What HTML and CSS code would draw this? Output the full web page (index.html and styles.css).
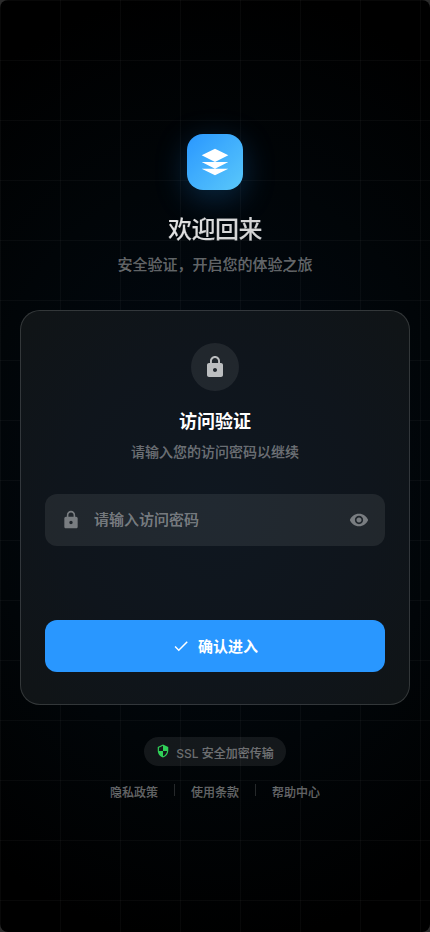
FILE: index.html
```html
<!DOCTYPE html>
<html lang="zh-CN">
<head>
<meta charset="utf-8">
<meta name="viewport" content="width=device-width, initial-scale=1">
<title>访问验证</title>
<link rel="stylesheet" href="styles.css">
</head>
<body>
<div class="screen">
  <main class="page">
    <header class="brand">
      <div class="logo">
        <svg width="32" height="32" viewBox="0 0 24 24" fill="currentColor"><path d="M12 2L2 7l10 5 10-5-10-5zM2 17l10 5 10-5M2 12l10 5 10-5"/></svg>
      </div>
      <h1 class="brand-title">欢迎回来</h1>
      <p class="brand-subtitle">安全验证，开启您的体验之旅</p>
    </header>
    <section class="card">
      <div class="card-icon">
        <svg width="24" height="24" viewBox="0 0 24 24" fill="currentColor"><path d="M18 8h-1V6c0-2.76-2.24-5-5-5S7 3.24 7 6v2H6c-1.1 0-2 .9-2 2v10c0 1.1.9 2 2 2h12c1.1 0 2-.9 2-2V10c0-1.1-.9-2-2-2zm-6 9c-1.1 0-2-.9-2-2s.9-2 2-2 2 .9 2 2-.9 2-2 2zm3.1-9H8.9V6c0-1.71 1.39-3.1 3.1-3.1 1.71 0 3.1 1.39 3.1 3.1v2z"/></svg>
      </div>
      <h2 class="card-title">访问验证</h2>
      <p class="card-desc">请输入您的访问密码以继续</p>
      <div class="field">
        <svg width="20" height="20" viewBox="0 0 24 24" fill="currentColor"><path d="M18 8h-1V6c0-2.76-2.24-5-5-5S7 3.24 7 6v2H6c-1.1 0-2 .9-2 2v10c0 1.1.9 2 2 2h12c1.1 0 2-.9 2-2V10c0-1.1-.9-2-2-2zm-6 9c-1.1 0-2-.9-2-2s.9-2 2-2 2 .9 2 2-.9 2-2 2zm3.1-9H8.9V6c0-1.71 1.39-3.1 3.1-3.1 1.71 0 3.1 1.39 3.1 3.1v2z"/></svg>
        <input class="field-input" type="password" placeholder="请输入访问密码">
        <svg width="20" height="20" viewBox="0 0 24 24" fill="currentColor"><path d="M12 4.5C7 4.5 2.73 7.61 1 12c1.73 4.39 6 7.5 11 7.5s9.27-3.11 11-7.5c-1.73-4.39-6-7.5-11-7.5zM12 17c-2.76 0-5-2.24-5-5s2.24-5 5-5 5 2.24 5 5-2.24 5-5 5zm0-8c-1.66 0-3 1.34-3 3s1.34 3 3 3 3-1.34 3-3-1.34-3-3-3z"/></svg>
      </div>
      <button class="submit" type="button">
        <svg width="18" height="18" viewBox="0 0 24 24" fill="currentColor"><path d="M9 16.17L4.83 12l-1.42 1.41L9 19 21 7l-1.41-1.41z"/></svg>
        <span class="submit-label">确认进入</span>
      </button>
    </section>
    <footer class="footer">
      <div class="badge">
        <svg class="shield" width="14" height="14" viewBox="0 0 24 24" fill="currentColor"><path d="M12 1L3 5v6c0 5.55 3.84 10.74 9 12 5.16-1.26 9-6.45 9-12V5l-9-4zm0 10.99h7c-.53 4.12-3.28 7.79-7 8.94V12H5V6.3l7-3.11v8.8z"/></svg>
        <span class="badge-text"><span class="latin">SSL</span> 安全加密传输</span>
      </div>
      <nav class="links">
        <a class="link">隐私政策</a>
        <span class="divider"></span>
        <a class="link">使用条款</a>
        <span class="divider"></span>
        <a class="link">帮助中心</a>
      </nav>
    </footer>
  </main>
</div>
</body>
</html>
```
FILE: styles.css
```css
* {
  box-sizing: border-box;
  margin: 0;
  padding: 0;
}

body {
  background: #2b2b2b;
  color: #fff;
  font-family: Inter, "Noto Sans CJK SC", sans-serif;
  font-weight: 500;
  -webkit-text-stroke-width: 0.12px;
}

svg {
  display: block;
  flex: none;
}

.screen {
  height: 932px;
  border-radius: 8px;
  overflow: hidden;
  background:
    linear-gradient(rgba(255, 255, 255, 0.03) 1px, transparent 1px) 0 0 / 60px 60px,
    linear-gradient(90deg, rgba(255, 255, 255, 0.03) 1px, transparent 1px) 0 0 / 60px 60px,
    radial-gradient(ellipse 390px 480px at 50% 50%, #020a14 0%, #010508 60%, #000 100%);
}

.page {
  display: flex;
  flex-direction: column;
  height: 100%;
  padding: 134px 20px 0;
}

.brand {
  display: flex;
  flex-direction: column;
  align-items: center;
}

.logo {
  display: grid;
  place-items: center;
  width: 56px;
  height: 56px;
  border-radius: 16px;
  background: linear-gradient(135deg, #2997ff, #5ac8fa);
  box-shadow: 0 8px 32px rgba(41, 151, 255, 0.25);
}

.brand-title {
  align-self: stretch;
  margin-top: 21px;
  font-size: 24px;
  font-weight: 500;
  line-height: 38px;
  letter-spacing: -0.5px;
  text-align: center;
  background: linear-gradient(135deg, #fff, rgba(255, 255, 255, 0.7));
  background-clip: text;
  -webkit-background-clip: text;
  color: transparent;
}

.brand-subtitle {
  margin-top: 4px;
  font-size: 15px;
  line-height: 24px;
  color: rgba(255, 255, 255, 0.38);
}

.card {
  display: flex;
  flex-direction: column;
  align-items: center;
  height: 395px;
  margin-top: 33px;
  padding: 32px 24px;
  border: 1px solid rgba(255, 255, 255, 0.15);
  border-radius: 20px;
  background: radial-gradient(ellipse at center, #0f1720 0%, #0f151c 55%, #101416 100%);
}

.card-icon {
  display: grid;
  place-items: center;
  width: 48px;
  height: 48px;
  border-radius: 50%;
  background: rgba(255, 255, 255, 0.08);
  color: rgba(255, 255, 255, 0.7);
}

.card-title {
  margin-top: 17px;
  font-size: 18px;
  font-weight: 700;
  line-height: 28px;
  -webkit-text-stroke-width: 0;
}

.card-desc {
  margin-top: 5px;
  font-size: 14px;
  line-height: 22px;
  color: rgba(255, 255, 255, 0.38);
}

.field {
  display: flex;
  align-items: center;
  gap: 13px;
  width: 100%;
  height: 52px;
  margin-top: 31px;
  padding: 0 16px;
  border-radius: 12px;
  background: rgba(255, 255, 255, 0.08);
  color: rgba(255, 255, 255, 0.4);
}

.field-input {
  flex: 1;
  min-width: 0;
  padding-bottom: 2px;
  border: 0;
  outline: 0;
  background: none;
  color: #fff;
  font: inherit;
  font-size: 15px;
}

.field-input::placeholder {
  color: rgba(255, 255, 255, 0.4);
}

.submit {
  display: flex;
  align-items: center;
  justify-content: center;
  gap: 8px;
  width: 100%;
  height: 52px;
  margin-top: auto;
  border: 0;
  border-radius: 12px;
  background: #2997ff;
  color: #fff;
  font-family: inherit;
  font-size: 15px;
  font-weight: 700;
  -webkit-text-stroke-width: 0;
}

.submit-label {
  padding-bottom: 2px;
}

.footer {
  display: flex;
  flex-direction: column;
  align-items: center;
  margin-top: 32px;
  color: rgba(255, 255, 255, 0.38);
  font-size: 12px;
}

.badge {
  display: flex;
  align-items: center;
  gap: 6px;
  height: 29px;
  padding: 0 12px;
  border-radius: 15px;
  background: rgba(255, 255, 255, 0.08);
}

.badge-text {
  padding-top: 1px;
}

.latin {
  -webkit-text-stroke-width: 0;
}

.shield {
  margin-bottom: 2px;
  color: #30d158;
}

.links {
  display: flex;
  align-items: center;
  gap: 16px;
  margin-top: 15px;
  line-height: 18px;
}

.link {
  padding-top: 3px;
  margin-bottom: -3px;
}

.divider {
  width: 1px;
  height: 12px;
  background: rgba(255, 255, 255, 0.15);
}
```
